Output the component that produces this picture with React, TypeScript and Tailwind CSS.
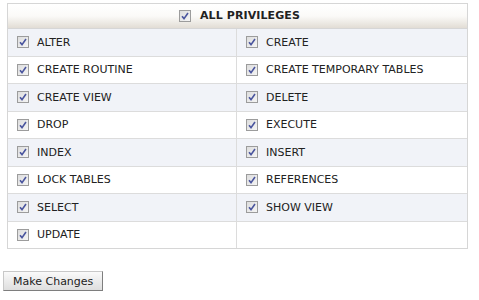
const privileges: [string, string | null][] = [
  ['ALTER', 'CREATE'],
  ['CREATE ROUTINE', 'CREATE TEMPORARY TABLES'],
  ['CREATE VIEW', 'DELETE'],
  ['DROP', 'EXECUTE'],
  ['INDEX', 'INSERT'],
  ['LOCK TABLES', 'REFERENCES'],
  ['SELECT', 'SHOW VIEW'],
  ['UPDATE', null],
];

function Check() {
  return (
    <svg width="12" height="12" viewBox="0 0 12 12" className="shrink-0">
      <defs>
        <linearGradient id="cbg" x1="0" y1="0" x2="1" y2="1">
          <stop offset="0" stopColor="#dcdcdc" />
          <stop offset="1" stopColor="#f6f6f6" />
        </linearGradient>
      </defs>
      <rect x="0.5" y="0.5" width="11" height="11" fill="url(#cbg)" stroke="#9c9c9c" />
      <path d="M3 6.2 L5 8.6 L9 3" fill="none" stroke="#4a559e" strokeWidth="1.6" />
    </svg>
  );
}

function Cell({ label, last }: { label: string | null; last?: boolean }) {
  return (
    <div
      className={`flex items-center h-[26.5px] pl-[9px] gap-[8px] ${
        last ? '' : 'border-r border-[#dcdcdc]'
      }`}
    >
      {label && (
        <>
          <Check />
          <span className="pt-[1px]">{label}</span>
        </>
      )}
    </div>
  );
}

export default function App() {
  return (
    <div
      className="w-[479px] h-[300px] bg-white text-[11px] text-[#222]"
      style={{ fontFamily: 'Verdana, "DejaVu Sans", sans-serif' }}
    >
      <div className="pt-[3px] pl-[7px]">
        <div className="w-[461px] border border-[#d6d6d6]">
          <div className="h-[25px] flex items-center justify-center gap-[9px] pl-[4px] bg-gradient-to-b from-white via-[#fbfaf8] to-[#e2ddd5] border-b border-[#d6d6d6]">
            <Check />
            <span className="font-bold text-[11px] pt-[1px] tracking-[0.1px]">ALL PRIVILEGES</span>
          </div>
          {privileges.map(([a, b], i) => (
            <div
              key={a}
              className={`grid grid-cols-[229px_1fr] ${
                i % 2 === 0 ? 'bg-[#f1f3f8]' : 'bg-white'
              } ${i < privileges.length - 1 ? 'border-b border-[#dcdcdc]' : ''}`}
            >
              <Cell label={a} />
              <Cell label={b} last />
            </div>
          ))}
        </div>
      </div>
      <div className="pl-[3px] pt-[22px]">
        <button className="h-[20px] px-[9px] bg-gradient-to-b from-[#fafafa] to-[#dedede] border border-[#c8c8c8] border-r-[#7e7e7e] border-b-[#7e7e7e] text-[11px] text-[#222] leading-none">
          Make Changes
        </button>
      </div>
    </div>
  );
}
